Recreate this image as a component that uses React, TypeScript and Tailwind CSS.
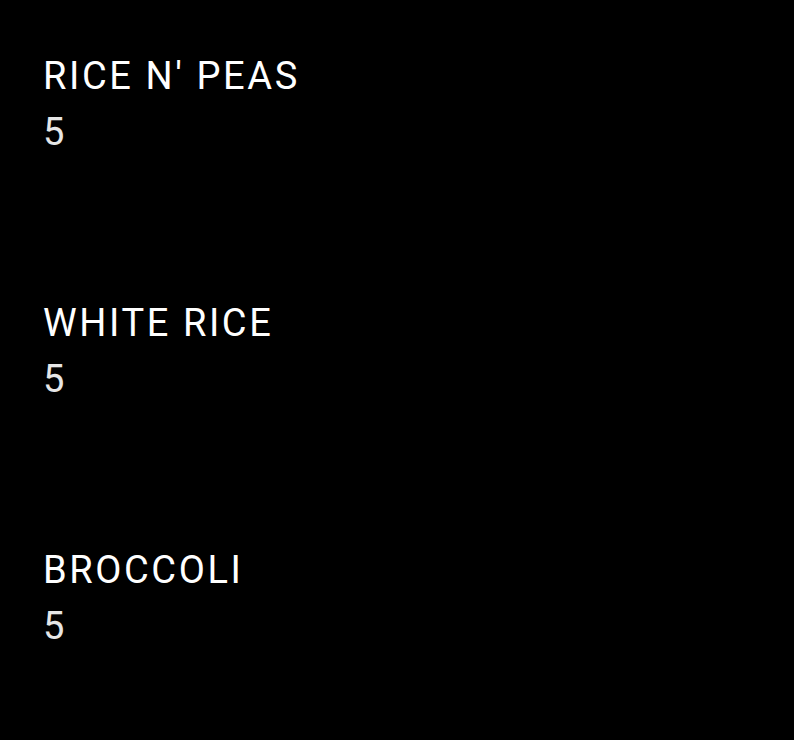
const items = [
  { name: "RICE N' PEAS", qty: 5 },
  { name: 'WHITE RICE', qty: 5 },
  { name: 'BROCCOLI', qty: 5 },
];

export default function App() {
  return (
    <div
      className="h-[740px] w-full overflow-hidden bg-black pl-[43px] pt-[48px]"
      style={{ fontFamily: 'Roboto, "Noto Sans", sans-serif' }}
    >
      {items.map((item) => (
        <div key={item.name} className="h-[247px]">
          <p className="text-[38px] leading-[56px] tracking-[2.6px] text-white">{item.name}</p>
          <p className="text-[38px] leading-[56px] text-[#e6e6e6]">{item.qty}</p>
        </div>
      ))}
    </div>
  );
}
